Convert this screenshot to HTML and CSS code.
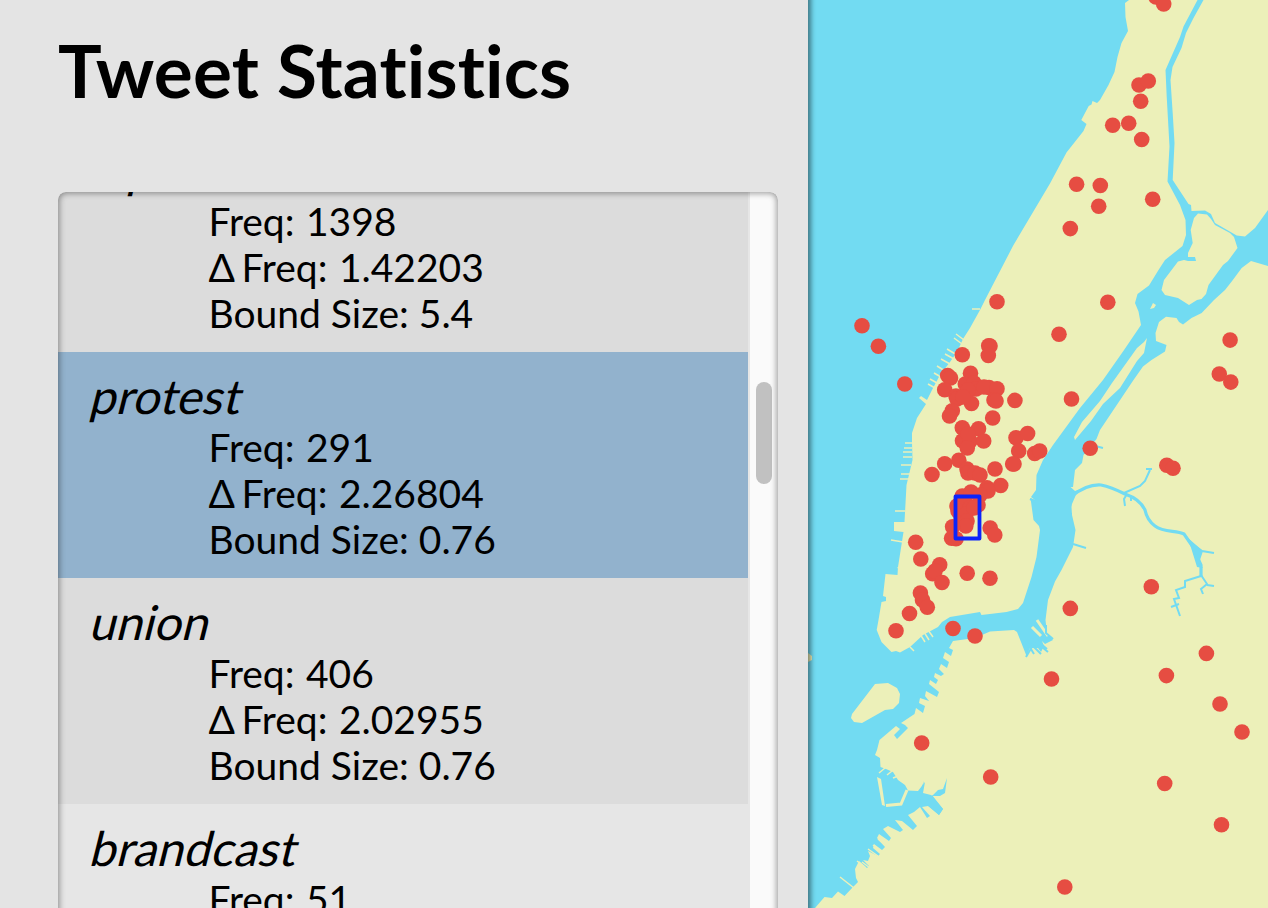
FILE: index.html
```
<!DOCTYPE html>
<html lang="en">
<head>
<meta charset="utf-8">
<title>Tweet Statistics</title>
<link rel="stylesheet" href="styles.css">
</head>
<body>
<main class="app">
  <section class="panel">
    <h1 class="title">Tweet Statistics</h1>
    <div class="list">
      <div class="items">
        <article class="item"><h2 class="word">hipster</h2><p class="freq">Freq: 1398</p><p class="freq"><span class="delta">Δ</span> Freq: 1.42203</p><p>Bound Size: 5.4</p></article>
        <article class="item selected"><h2 class="word">protest</h2><p class="freq">Freq: 291</p><p class="freq"><span class="delta">Δ</span> Freq: 2.26804</p><p>Bound Size: 0.76</p></article>
        <article class="item"><h2 class="word">union</h2><p class="freq">Freq: 406</p><p class="freq"><span class="delta">Δ</span> Freq: 2.02955</p><p>Bound Size: 0.76</p></article>
        <article class="item light"><h2 class="word">brandcast</h2><p class="freq">Freq: 51</p></article>
      </div>
      <div class="track"><div class="thumb"></div></div>
    </div>
  </section>
  <section class="map">
    <svg class="chart" viewBox="808 0 460 908" width="460" height="908">
      <g class="land">
        <!-- Manhattan -->
        <path d="M1129 0L1125 3 1125.500 17 1128 31 1121.500 43 1117.500 57 1114.500 72 1108.500 85 1100 100 1097 103 1092.500 101 1091.500 104.500 1088.700 106 1081.300 120 1086.500 124 1083.500 131 1066.500 152.500 1050 183.500 1013.500 245 985 300 980 310 975 319 970 328 963 339 957 352 950 362 940 375 932 390 927 400 921 396 919 398 926 404 917 418 912 433 912 443 912.500 460 906.500 485 904.500 522 894 522 894 531 903.500 532 898 567 897.500 575 885.500 574 883 596 886 597 886 601 881.500 602 878.500 620 876.700 630 881.500 642 891.500 652 896 651 900 652.500 910 647 923 635 938 627 942 622 950 617 980 612 981.500 615 1006.500 612 1018 609 1023 603 1031.500 577 1036.500 557 1040 530 1039 526 1033.500 520 1030.500 498 1035 500 1031 497 1036 490 1036.500 475 1043 460 1053 445 1080 408 1103 380 1123 351.500 1141 325 1138.500 311.500 1135 303 1137.500 294 1149 285.500 1158.500 270 1165 260 1182.500 246 1186 235 1185.500 220 1180 205 1167.500 181.500 1169.500 146.500 1166.700 96.500 1165.500 70 1180 37 1183.500 26.500 1197.500 0Z"/>
        <!-- Bronx -->
        <path d="M1203.500 0L1193.500 18 1186 33 1181.500 48 1172.500 67 1170.500 80 1172.700 113 1174.500 143 1172.700 180 1188.500 204 1191 205 1191.500 211 1205 210.500 1211 214 1215 223 1236.700 235.500 1245 236.500 1255 228 1268 210V0Z"/>
        <!-- Randall's Island -->
        <path d="M1198 213.500L1207 214.500 1211 219 1215 225 1230 233 1234 237 1237.500 248 1228 261 1223 265 1208.500 285 1206 294 1201.500 299 1197 300 1189 305 1178 298 1165 295 1161.500 290 1164 280 1178 261.500 1184 260 1188 261 1196 261 1195 257 1188 257 1188 253 1192.700 243 1190.700 230 1194 218Z"/>
        <!-- Mill Rock and Roosevelt Island -->
        <path d="M1150 309L1153 303 1156 305 1154 308ZM1147 338L1144 353 1137 361 1120 388 1103 404 1091 421 1075 440 1074 437 1082 422 1100 401 1112 383 1137 348 1144 342Z"/>
        <!-- Brooklyn and Queens -->
        <path d="M1268 266L1251 261 1241.700 268 1231.700 281.500 1225 290 1214 300 1201.700 313 1191.500 318 1183 324.500 1179 322 1176.500 318 1166 316.700 1159 322 1155.500 333 1156 341 1166.500 345 1165 351.500 1151.500 360 1143 366.500 1133.500 380 1100 430 1096.500 439 1083.500 455 1082 463 1075 470 1073 487 1070.500 487 1075 491 1078 490 1072 504 1071.500 507 1072 515 1075.500 530 1073 547 1061.500 570 1055 581.500 1048 600 1045.500 620 1047 634 1053 640 1045 644 1042 641 1044 646 1041 652 1038 648 1030 648 1026.500 656 1021 642 1017 632 1014 630 990 631.500 975 638 953 641 949 648 953 650 951 656 945 652 943 658 949 662 947 668 941 664 939 669 944 674 941 676 935 673 934 677 938 680 936 684 930 680 929 684 939 692 937 697 926 691 925 696 929 701 920 698 919 703 925 706 923 713 916 708 914.500 714 901 723 905 725 908 728 897 739 894 735 900 729 896 726 879.500 740 877 750 875 755 880 758 880.500 767 886 769 893 772 898 780 905 785 908 790.500 918 791 925 782 923 793 931 795 943 809 939 815 928 806 922 807 930 816 927 818 920 807 914 812 908 815 917 826 913 830 902 821 895 820 903 830 900 832 888 826 883 829 891 838 889 841 879 834 877 838 885 847 882 850 874 844 873 848 880 854 878 856 868 851 870 856 868 861 863 860 869 866 867 868 859 861 855 869 856 878 858 882 853 887 844.500 896 838 891.500 832 898 824.500 897 815 908H1268Z"/>
        <!-- Governors Island -->
        <path d="M875 684L888 683 897 688 900 694 899 703 893 709 885 710 862 723 854 722 851 718 852 714Z"/>
        <path d="M808 653L812 656 812 660 808 662ZM877 777L881 779 885 806 882 805Z"/>
      </g>
      <g class="shore">
        <path class="pier" d="M956 334l8 6M954 338l8 6M947 349l10 6M945 354l9 5M941 359l9 5M937 366l8 5M934 373l7 4M930 379l7 4M928 384l7 4M972 309h8M905 443h7M904 448h8M903 452h9M903 457h9M901 465h10M901 474h10M900 479h9M895 511h10M891 540l12 2M898 567l3 7"/>
        <path class="pier" d="M910 647l4 4M920 634l5 8M924 632l5 8M928 630l5 7M840 877l14 11M879 773l12-10M887 775l10-8M893 778l8-3M862 862l8 6M857 861l8 6M868 849l10 7M873 845l10 8M878 839l9 8"/>
        <path class="quay" d="M886 805.500L901 804 907 790M1037 620l11 16M1032 627l9 9"/>
      </g>
      <g class="creeks">
        <path class="creek wide" d="M1072 496Q1087 484 1101 485 1111 487 1125 494 1140 499 1145 510 1147 520 1155 526C1164 533 1176 530 1184 534L1193 547 1201 565 1201 577"/>
        <path class="creek" d="M1124 493L1140 486 1145 481 1150 470M1146 469h6M1127 494l-3 5 1 7M1131 496v5M1192 544L1202 551 1214 553M1201 576L1185 581 1185 587 1176 590 1179 598 1174 599 1180 616M1171 607l8-3M1201 575L1207 584 1201 589 1203 594M1207 585l7 1M1073 544L1086 548M1095 446l8 2M1065 514h7M1030 499l6 3M1046 625v8l7 6M1026 657l7-12M1031 638l17 14M1034 638l13 11M1029 642l12 12M1026 641l8 13"/>
        <path class="pond" d="M1188 538L1203 551 1199 563 1203 568 1197 567ZM917 799L924 781 920 804ZM932 796L938 790 943 789 947 778 945 793 940 796ZM932 795L943 809 939 815 925 803Z"/>
      </g>
      <g id="tweets" class="tweets"></g>
      <rect class="bounds" x="955.500" y="496.500" width="24" height="42"/>
    </svg>
  </section>
</main>
<script src="map.js"></script>
</body>
</html>
```
FILE: styles.css
```
body { margin: 0; font-family: Lato, sans-serif; color: #000; background: #e4e4e4; font-variant-ligatures: none; }
.app { display: flex; width: 1268px; height: 908px; overflow: hidden; }
.panel { box-sizing: border-box; width: 808px; height: 908px; padding: 26px 30px 0 58px; display: flex; flex-direction: column; background: #e4e4e4; }
.title { margin: 0 0 78px; font-size: 73px; line-height: 88px; font-weight: 700; letter-spacing: .15px; white-space: nowrap; }
.list { position: relative; flex: none; display: flex; height: 760px; border-radius: 8px; overflow: hidden; background: #e6e6e6; }
.list::after { content: ""; position: absolute; inset: 0; border-radius: 8px; box-shadow: inset 0 0 6px 1px rgba(0, 0, 0, .42); }
.items { width: 690px; margin-top: -66px; margin-right: 2px; }
.item { box-sizing: border-box; height: 226px; padding: 15px 32px 15px 30px; background: #dcdcdc; }
.item.selected { background: #92b2cd; }
.item.light { background: #e6e6e6; }
.word { margin: 0 0 -1px; font-size: 48px; line-height: 58px; font-weight: 400; transform: skewX(-14deg); transform-origin: 0 47px; }
.item p { margin: 0 0 0 120.500px; font-size: 39px; line-height: 46px; white-space: nowrap; }
.item .freq { word-spacing: 1.500px; }
.delta { letter-spacing: -5px; }
.track { box-sizing: border-box; width: 28px; padding: 190px 6px 0; background: #fafafa; }
.thumb { height: 102px; border-radius: 8px; background: #c1c1c1; }
.map { position: relative; width: 460px; height: 908px; overflow: hidden; background: #72dbf2; }
.map::after { content: ""; position: absolute; inset: -12px -12px -12px 0; box-shadow: inset 5px 0 5px -2px rgba(0, 0, 0, .45); }
.chart { display: block; }
.land { fill: #ecf0b9; }
.pier { fill: none; stroke: #ecf0b9; stroke-width: 1.500; }
.quay { fill: none; stroke: #ecf0b9; stroke-width: 3; }
.creek { fill: none; stroke: #72dbf2; stroke-width: 2; }
.creek.wide { stroke-width: 3.200; }
.pond { fill: #72dbf2; }
.tweets { fill: #e64d42; }
.bounds { fill: none; stroke: #0b24fb; stroke-width: 3.800; stroke-linejoin: round; }
```
FILE: map.js
```
const tweets = [
  [1156, -3], [1163.7, 4], [1139, 85], [1148.3, 81], [1140.7, 101.3], [1112.7, 125.3], [1128.7, 123.3], [1141.7, 139.5],
  [1076.6, 184.3], [1100.3, 185.5], [1098.7, 206.3], [1152.7, 199.2], [1070.3, 228.6], [997, 301.7], [1107.8, 302.2],
  [1059, 334.3], [862, 325.8], [878.4, 346.2], [904.8, 384], [1230.1, 340.1], [1219.3, 374], [1230.8, 382.1],
  [962.3, 354.8], [988.7, 345.7], [990, 346], [988.3, 355.5], [1014.9, 400.4], [992.7, 418], [1071.5, 399],
  [947.7, 375.5], [950.5, 378], [944.7, 389.7], [970.5, 373.2], [965.3, 384], [974, 383], [976, 389], [968, 390],
  [989, 387.5], [984, 387], [997, 388.7], [994, 400], [996, 401], [971.5, 403.5], [956, 396], [957, 399], [963, 397], [952.3, 410.7], [949.5, 416],
  [962.3, 427.7], [978.5, 428.7], [962.5, 440.7], [970, 441], [968, 434], [967.3, 448], [983.7, 441],
  [1016, 437.7], [1027.6, 433.5], [1018.7, 451], [1034.7, 453.5], [1039.7, 451], [1012.7, 464], [1014, 464],
  [944.7, 463.7], [958.8, 460.3], [932, 474.5], [967, 469], [968, 473], [975, 473], [980, 475], [995, 469],
  [1000.7, 485.5], [987, 487.7], [988, 491], [962.3, 496], [971, 492], [980, 495], [978, 505], [957, 506], [958, 511], [961, 516],
  [966, 504], [970, 508], [966, 514], [967, 521], [965.8, 526], [974, 508],
  [952.6, 526.7], [951.6, 538.3], [956, 538.7], [990.2, 528], [994.8, 535], [915.7, 542.2], [920.8, 559], [939.7, 564.8],
  [932.7, 573.7], [935, 571], [942, 582.5], [967.2, 573.2], [990, 578.2], [920.4, 593], [922.5, 600], [927.3, 607.3], [909.5, 613.5],
  [896, 630.8], [953, 628.5], [975, 636], [1070.3, 608.4], [1151.3, 586.7], [1090.2, 448.2], [1166.8, 465.2], [1173, 468.3],
  [1206.4, 653.4], [1166.4, 675.6], [1051.5, 679], [1220, 704], [1242, 732], [921.7, 743], [990.7, 777],
  [1164.7, 783.5], [1221.5, 824.7], [1064.8, 887]
];
const layer = document.getElementById('tweets');
for (const [x, y] of tweets) {
  const dot = document.createElementNS('http://www.w3.org/2000/svg', 'circle');
  dot.setAttribute('cx', x);
  dot.setAttribute('cy', y);
  dot.setAttribute('r', 7.8);
  layer.appendChild(dot);
}
```
